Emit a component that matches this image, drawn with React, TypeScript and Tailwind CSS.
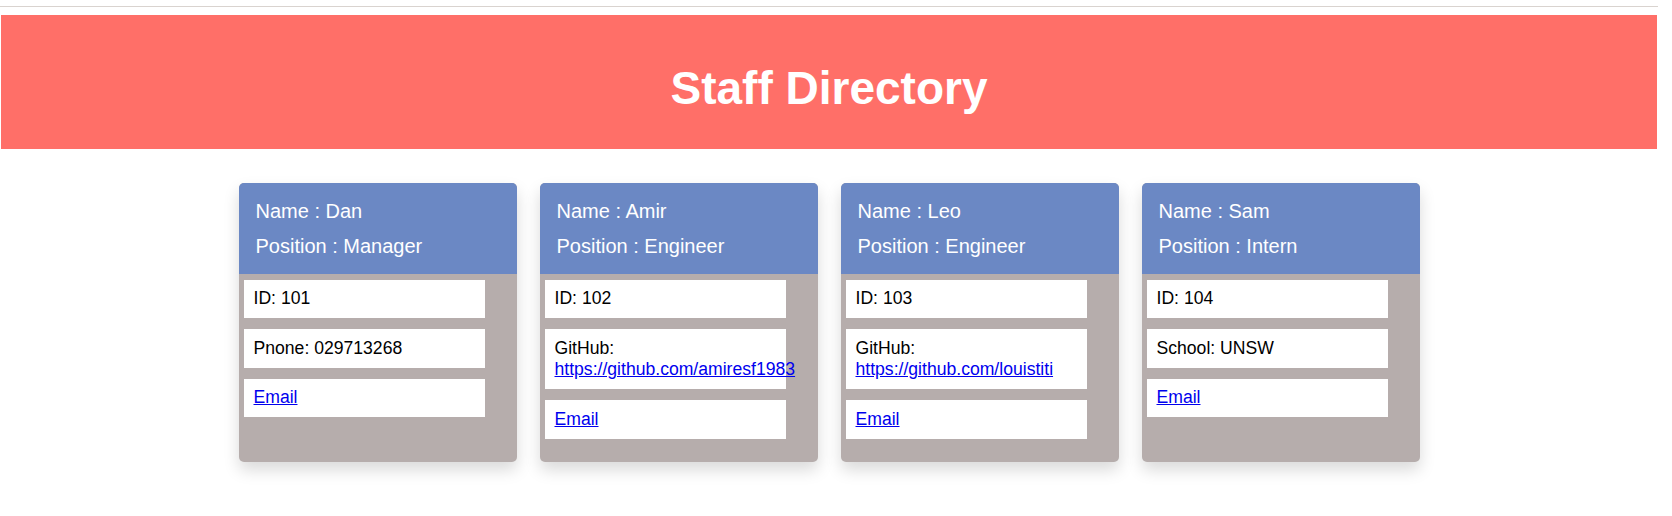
const staff = [
  { name: "Dan", position: "Manager", id: 101, extra: { label: "Pnone", value: "029713268" } },
  { name: "Amir", position: "Engineer", id: 102, extra: { label: "GitHub", value: "https://github.com/amiresf1983", link: true } },
  { name: "Leo", position: "Engineer", id: 103, extra: { label: "GitHub", value: "https://github.com/louistiti", link: true } },
  { name: "Sam", position: "Intern", id: 104, extra: { label: "School", value: "UNSW" } },
]

type Member = (typeof staff)[number]

function InfoBox({ children }: { children: React.ReactNode }) {
  return (
    <div className="w-[241px] bg-white px-[10px] py-[8.4px] text-[17.6px] leading-[21.6px] text-black">
      {children}
    </div>
  )
}

function StaffCard({ member }: { member: Member }) {
  const extra = member.extra as { label: string; value: string; link?: boolean }
  return (
    <div className="w-[278px] rounded-[5px] overflow-hidden bg-[#b6adac] shadow-[0_8px_16px_rgba(0,0,0,0.15)]">
      <div className="bg-[#6b88c4] pl-[17px] pt-[11px] pb-[10px] text-[20px] leading-[35px] text-white">
        <div>Name : {member.name}</div>
        <div>Position : {member.position}</div>
      </div>
      <div className="flex flex-col gap-[11px] pl-[5px] pt-[6px] pb-[23px]">
        <InfoBox>ID: {member.id}</InfoBox>
        <InfoBox>
          {extra.label}:{" "}
          {extra.link ? (
            <a href={extra.value} className="text-[#0000ee] underline">
              {extra.value}
            </a>
          ) : (
            extra.value
          )}
        </InfoBox>
        <InfoBox>
          <a href="#" className="text-[#0000ee] underline">
            Email
          </a>
        </InfoBox>
      </div>
    </div>
  )
}

export default function App() {
  return (
    <div className="min-h-[516px] bg-white font-['Liberation_Sans',Arial,sans-serif]">
      <div className="pt-[6px]">
        <div className="h-px w-[1658px] bg-[#d9d3cf]" />
      </div>
      {/* Jumbotron */}
      <div className="mt-[8px] ml-px h-[134px] w-[1656px] bg-[#ff6f68] pt-[47px]">
        <h1 className="text-center text-[46px] leading-[52px] font-bold text-white">Staff Directory</h1>
      </div>

      {/* Cards */}
      <div className="mt-[34px] flex w-[1658px] justify-center gap-[23px]">
        {staff.map((m) => (
          <StaffCard key={m.id} member={m} />
        ))}
      </div>
    </div>
  )
}
